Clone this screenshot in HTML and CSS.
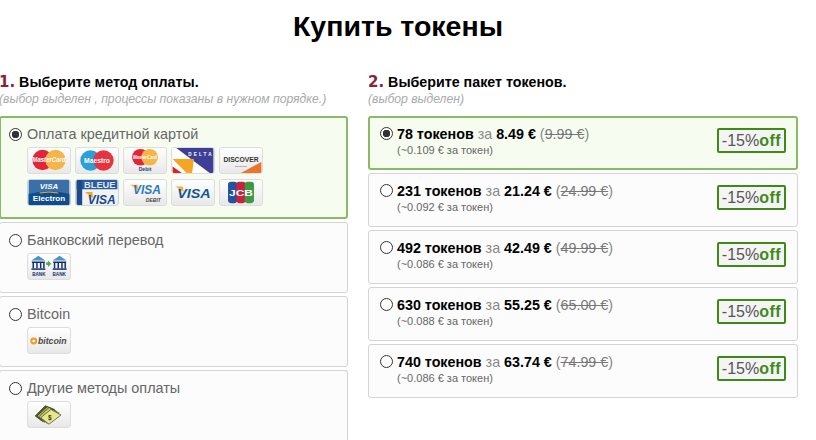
FILE: index.html
```html
<!DOCTYPE html>
<html lang="ru">
<head>
    <meta charset="UTF-8">
    <title>Купить токены</title>
    <link rel="stylesheet" href="styles.css">
</head>
<body>
    <h1>Купить токены</h1>

    <div class="columns">
        <!-- Payment methods -->
        <div class="col col-methods">
            <h2><span class="num">1.</span> Выберите метод оплаты.</h2>
            <p class="hint">(выбор выделен , процессы показаны в нужном порядке.)</p>

            <div class="method selected">
                <label class="method-name"><input type="radio" name="method" checked> Оплата кредитной картой</label>
                <div class="cards">
                    <svg class="card" viewBox="0 0 44 27"><circle cx="15" cy="13" r="11" fill="#e2263a"/><circle cx="29" cy="13" r="11" fill="#f5b548"/><text x="22" y="15.500" class="logo-it" font-size="7" fill="#fff" text-anchor="middle" textLength="36" lengthAdjust="spacingAndGlyphs">MasterCard</text></svg>
                    <svg class="card" viewBox="0 0 44 27"><circle cx="15" cy="13.500" r="11" fill="#2b9fd6"/><circle cx="29" cy="13.500" r="11" fill="#e5333f"/><text x="22" y="16.500" class="logo" font-size="8.500" fill="#fff" text-anchor="middle" textLength="28" lengthAdjust="spacingAndGlyphs">Maestro</text></svg>
                    <svg class="card" viewBox="0 0 44 27"><circle cx="17" cy="10" r="9" fill="#e2263a"/><circle cx="27" cy="10" r="9" fill="#f5b548"/><text x="22" y="12" class="logo-it" font-size="5.500" fill="#fff" text-anchor="middle" textLength="26" lengthAdjust="spacingAndGlyphs">MasterCard</text><text x="22" y="24.500" class="logo" font-size="5.500" fill="#24406f" text-anchor="middle">Debit</text></svg>
                    <svg class="card" viewBox="0 0 44 27"><rect width="44" height="27" fill="#fff"/><polygon points="4,0 44,0 44,27 40,27" fill="#3d3f96"/><polygon points="0,5 36,27 0,27" fill="#fff"/><polygon points="0,12 23,12 21,27 15,27" fill="#f4a623"/><polygon points="0,20 10,27 0,27" fill="#d8232a"/><text x="17" y="8.500" class="logo" font-size="5" fill="#fff" textLength="25">DELTA</text></svg>
                    <svg class="card" viewBox="0 0 44 27"><polygon points="44,15 44,27 22,27" fill="#e8762b"/><text x="22" y="15" class="logo" font-size="7.500" fill="#333" text-anchor="middle" textLength="38" lengthAdjust="spacingAndGlyphs">DISCOVER</text><text x="22" y="20" class="logo" font-size="2.500" fill="#777" text-anchor="middle">NETWORK</text></svg>
                    <svg class="card card-flat" viewBox="0 0 44 27"><rect width="44" height="27" fill="#3a6fa8"/><path d="M0 15q22 -5 44 0v12H0z" fill="#0f4c8c"/><path d="M12 14q10 -2 20 0" stroke="#f4b13d" fill="none"/><text x="22" y="10" class="logo-it" font-size="8.500" fill="#fff" text-anchor="middle">VISA</text><text x="22" y="23" class="logo" font-size="8" fill="#fff" text-anchor="middle" textLength="35" lengthAdjust="spacingAndGlyphs">Electron</text></svg>
                    <svg class="card card-flat" viewBox="0 0 44 27"><rect width="44" height="27" fill="#f2f2f2"/><rect width="44" height="10" fill="#2a5b9c"/><rect width="6" height="27" fill="#1d4a86"/><text x="25" y="8.500" class="logo" font-size="9" fill="#dfe8f3" text-anchor="middle" textLength="34" lengthAdjust="spacingAndGlyphs">BLEUE</text><polygon points="9,13 17,13 18,20" fill="#f4a623"/><text x="27" y="25.500" class="logo-it" font-size="13.500" fill="#14498e" text-anchor="middle" textLength="30" lengthAdjust="spacingAndGlyphs">VISA</text></svg>
                    <svg class="card" viewBox="0 0 44 27"><polygon points="6,5 14,5 15,11" fill="#f4b13d"/><text x="24" y="15.500" class="logo-it" font-size="13.500" fill="#2e7ab8" text-anchor="middle" textLength="30" lengthAdjust="spacingAndGlyphs">VISA</text><text x="31" y="23.500" class="logo-it" font-size="5.500" font-weight="400" fill="#444" text-anchor="middle">DEBIT</text></svg>
                    <svg class="card" viewBox="0 0 44 27"><polygon points="3,7 11,7 12,13" fill="#f4b13d"/><text x="23" y="19" class="logo-it" font-size="14.500" fill="#14568e" text-anchor="middle" textLength="36" lengthAdjust="spacingAndGlyphs">VISA</text></svg>
                    <svg class="card" viewBox="0 0 44 27"><rect x="8" y="2" width="10" height="23" rx="3" fill="#24529c"/><rect x="17" y="2" width="10" height="23" rx="3" fill="#c8233c"/><rect x="26" y="2" width="10" height="23" rx="3" fill="#3c9a45"/><text x="22" y="17" class="logo" font-size="10.500" fill="#fff" text-anchor="middle" textLength="26" lengthAdjust="spacingAndGlyphs">JCB</text></svg>
                </div>
            </div>

            <div class="method">
                <label class="method-name"><input type="radio" name="method"> Банковский перевод</label>
                <div class="cards">
                    <svg class="card" viewBox="0 0 44 27"><g id="bank"><polygon points="3,7 10.500,2 18,7" fill="#4d94c4"/><path d="M3.500 9h14M5 9.500v6M9 9.500v6M13 9.500v6M16.500 9.500v6" stroke="#12306f" stroke-width="1.600" fill="none"/><rect x="3" y="15.500" width="15" height="1.600" fill="#12306f"/></g><use href="#bank" x="23"/><polygon points="19,9 21,9 21,7 24.500,10.500 21,14 21,12 19,12" fill="#4aae4f"/><text x="11" y="24" class="logo" font-size="5" fill="#12306f" text-anchor="middle">BANK</text><text x="33" y="24" class="logo" font-size="5" fill="#12306f" text-anchor="middle">BANK</text></svg>
                </div>
            </div>

            <div class="method">
                <label class="method-name"><input type="radio" name="method"> Bitcoin</label>
                <div class="cards">
                    <svg class="card" viewBox="0 0 44 27"><circle cx="5.500" cy="14" r="3.700" fill="#ee9b2d"/><circle cx="5.500" cy="14" r="1.400" fill="#fff"/><text x="10" y="17" class="logo-it" font-size="10" fill="#4a4a4a" textLength="31" lengthAdjust="spacingAndGlyphs">bitcoin</text></svg>
                </div>
            </div>

            <div class="method method-last">
                <label class="method-name"><input type="radio" name="method"> Другие методы оплаты</label>
                <div class="cards">
                    <svg class="card" viewBox="0 0 44 27"><polygon points="7,15 18,4 28,8 15,21" fill="#4c5a2c" stroke="#222" stroke-width=".6"/><polygon points="9,15 20,5 30,10 17,22" fill="#a8b552" stroke="#222" stroke-width=".6"/><polygon points="11,16 22,6 33,12 20,23" fill="#c6cf66" stroke="#222" stroke-width=".6"/><polygon points="13,17 24,8 35,14 22,24" fill="#e6ea86" stroke="#333" stroke-width=".7"/><text x="21" y="19.500" class="logo" font-size="7" fill="#333">$</text></svg>
                </div>
            </div>
        </div>

        <!-- Token packages -->
        <div class="col col-packs">
            <h2><span class="num">2.</span> Выберите пакет токенов.</h2>
            <p class="hint">(выбор выделен)</p>

            <div class="pack selected">
                <input type="radio" name="pack" checked>
                <div class="pack-text">
                    <div class="pack-main"><b>78 токенов</b> за <b>8.49 €</b> (<s>9.99 €</s>)</div>
                    <div class="pack-per">(~0.109 € за токен)</div>
                </div>
                <div class="off">-15%<b>off</b></div>
            </div>
            <div class="pack">
                <input type="radio" name="pack">
                <div class="pack-text">
                    <div class="pack-main"><b>231 токенов</b> за <b>21.24 €</b> (<s>24.99 €</s>)</div>
                    <div class="pack-per">(~0.092 € за токен)</div>
                </div>
                <div class="off">-15%<b>off</b></div>
            </div>
            <div class="pack">
                <input type="radio" name="pack">
                <div class="pack-text">
                    <div class="pack-main"><b>492 токенов</b> за <b>42.49 €</b> (<s>49.99 €</s>)</div>
                    <div class="pack-per">(~0.086 € за токен)</div>
                </div>
                <div class="off">-15%<b>off</b></div>
            </div>
            <div class="pack">
                <input type="radio" name="pack">
                <div class="pack-text">
                    <div class="pack-main"><b>630 токенов</b> за <b>55.25 €</b> (<s>65.00 €</s>)</div>
                    <div class="pack-per">(~0.088 € за токен)</div>
                </div>
                <div class="off">-15%<b>off</b></div>
            </div>
            <div class="pack">
                <input type="radio" name="pack">
                <div class="pack-text">
                    <div class="pack-main"><b>740 токенов</b> за <b>63.74 €</b> (<s>74.99 €</s>)</div>
                    <div class="pack-per">(~0.086 € за токен)</div>
                </div>
                <div class="off">-15%<b>off</b></div>
            </div>
        </div>
    </div>
</body>
</html>
```

FILE: styles.css
```css
html, body {
    height: 100%;
    overflow: hidden;
}

body {
    margin: 0;
    font-family: "Liberation Sans", Arial, sans-serif;
    background-color: #fff;
    color: #000;
}

h1 {
    margin: 0;
    padding: 10px 20px 0 0;
    font-size: 28.5px;
    line-height: 32px;
    text-align: center;
}

.columns {
    display: flex;
    gap: 20px;
    margin-top: 31px;
    margin-left: -1px;
}

.col-methods {
    width: 349px;
}

.col-packs {
    width: 430px;
}

h2 {
    margin: 0;
    font-size: 14.25px;
    line-height: 18px;
    font-weight: bold;
}

.num {
    color: #8c1f3c;
    font-family: "DejaVu Sans", sans-serif;
    font-size: 15px;
}

.hint {
    margin: 0 0 8px;
    height: 17px;
    font-size: 12.2px;
    line-height: 17px;
    font-style: italic;
    color: #aaa;
}

/* Radio buttons */
input[type="radio"] {
    appearance: none;
    flex: none;
    box-sizing: border-box;
    width: 13px;
    height: 13px;
    margin: 0;
    border: 1px solid #333;
    border-radius: 50%;
    background: #fff;
}

input[type="radio"]:checked {
    background: radial-gradient(circle, #333 0 3.5px, #fff 4px);
}

/* Payment methods */
.method {
    box-sizing: border-box;
    height: 71px;
    margin-bottom: 3px;
    padding: 9px 0 0 9px;
    border: 1px solid #d4d4d4;
    border-radius: 3px;
    background-color: #fcfcfc;
}

.method.selected {
    height: 103px;
    padding: 8px 0 0 8px;
    border: 2px solid #8abb64;
    background-color: #f6fdf0;
}

/* the frame ends before this panel does, so it has no bottom edge */
.method-last {
    height: 70px;
    margin-bottom: 0;
    border-bottom: none;
    border-radius: 3px 3px 0 0;
}

.method-name {
    display: flex;
    align-items: center;
    gap: 5px;
    height: 16px;
    font-size: 14.4px;
    color: #666;
}

.cards {
    display: grid;
    grid-template-columns: repeat(5, 44px);
    gap: 5px 4px;
    margin-top: 5px;
    margin-left: 18px;
}

.card {
    display: block;
    width: 44px;
    height: 27px;
    box-sizing: border-box;
    border: 1px solid #ddd;
    border-radius: 3px;
    background: linear-gradient(#fff, #e8e8e8);
    overflow: hidden;
}

.card-flat {
    border-color: #c8d4e0;
}

.logo {
    font-family: "Liberation Sans", Arial, sans-serif;
    font-weight: bold;
}

.logo-it {
    font-family: "Liberation Sans", Arial, sans-serif;
    font-weight: bold;
    font-style: italic;
}

/* Token packages */
.pack {
    display: flex;
    box-sizing: border-box;
    height: 54px;
    margin-bottom: 3px;
    padding: 10px 11px 0 11px;
    border: 1px solid #d4d4d4;
    border-radius: 3px;
    background-color: #fcfcfc;
}

.pack.selected {
    padding: 9px 10px 0 10px;
    border: 2px solid #8abb64;
    background-color: #f6fdf0;
}

.pack-text {
    flex: 1;
    margin-left: 4px;
}

.pack-main {
    font-size: 14.3px;
    line-height: 15px;
    color: #888;
}

.pack-main b {
    color: #000;
}

.pack-main s {
    color: #777;
}

.pack-per {
    font-size: 11px;
    line-height: 16px;
    color: #666;
}

.off {
    box-sizing: border-box;
    width: 69px;
    height: 25px;
    margin-top: 1px;
    border: 2px solid #3f8a17;
    border-radius: 2px;
    background-color: #f4f4f4;
    font-size: 16px;
    line-height: 21px;
    text-align: center;
    color: #555;
}

.off b {
    color: #3f8a17;
    letter-spacing: 0.5px;
}
```
